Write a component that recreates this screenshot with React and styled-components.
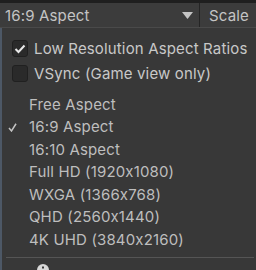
import React from "react";
import styled, { createGlobalStyle } from "styled-components";

const Global = createGlobalStyle`
  html, body { margin: 0; padding: 0; background: #383838; }
  body {
    width: 256px; height: 270px; overflow: hidden;
    font-family: Inter, "Noto Sans", sans-serif;
    font-feature-settings: "calt" 0;
    letter-spacing: 0.15px;
  }
`;

const Page = styled.div`
  width: 256px;
  height: 270px;
  display: flex;
  flex-direction: column;
  background: #383838;
  overflow: hidden;
`;

const TopStrip = styled.div`
  height: 3px;
  background: #1f1f1f;
  flex-shrink: 0;
`;

const Toolbar = styled.div`
  height: 24px;
  display: flex;
  background: #3c3c3c;
  border-bottom: 1px solid #4a4a4a;
  flex-shrink: 0;
`;

const Dropdown = styled.div`
  width: 200px;
  display: flex;
  align-items: center;
  justify-content: space-between;
  padding: 1px 6px 0 5px;
  box-sizing: border-box;
  color: #c4c4c4;
  font-size: 15px;
  border-right: 1px solid #252525;
`;

const ToolLabel = styled.div`
  padding: 1px 0 0 9px;
  display: flex;
  align-items: center;
  color: #c4c4c4;
  font-size: 15px;
`;

const Body = styled.div`
  flex: 1;
  display: flex;
`;

const EdgeStrip = styled.div`
  width: 2px;
  background: #4d5866;
`;

const Menu = styled.div`
  flex: 1;
  background: #383838;
  padding-top: 8px;
  display: flex;
  flex-direction: column;
`;

const ToggleRow = styled.div`
  height: 25px;
  display: flex;
  align-items: center;
  gap: 6px;
  padding-left: 10px;
  color: #c8c8c8;
  font-size: 15px;
`;

const Box = styled.div`
  width: 16px;
  height: 17px;
  box-sizing: border-box;
  border-radius: 3px;
  background: #2a2a2a;
  border: 1px solid #202020;
  display: flex;
  align-items: center;
  justify-content: center;
`;

const Items = styled.div`
  margin-top: 7px;
  display: flex;
  flex-direction: column;
`;

const Item = styled.div`
  height: 22.5px;
  display: flex;
  align-items: center;
  color: #bebebe;
  font-size: 15px;
  position: relative;
  padding-left: 27px;
`;

const Tick = styled.span`
  position: absolute;
  left: 6px;
  top: 50%;
  transform: translateY(-45%);
  display: flex;
`;

const Separator = styled.div`
  height: 1px;
  background: #555555;
  margin: 6px 2px 0 4px;
`;

const Footer = styled.div`
  padding: 6px 0 0 35px;
  display: flex;
`;

const Arrow = () => (
  <svg width="11" height="7" viewBox="0 0 11 7">
    <path d="M0 0 H11 L5.5 7 Z" fill="#c4c4c4" />
  </svg>
);

const Check = () => (
  <svg width="12" height="10" viewBox="0 0 12 10">
    <path d="M1.5 5 L4.5 8 L10.5 1.5" stroke="#e8e8e8" strokeWidth="2" fill="none" />
  </svg>
);

const SmallTick = () => (
  <svg width="9" height="9" viewBox="0 0 9 9">
    <path d="M1 5 L3.5 8 L8 0.8" stroke="#c4c4c4" strokeWidth="1.5" fill="none" />
  </svg>
);

const Info = () => (
  <svg width="12" height="12" viewBox="0 0 12 12">
    <circle cx="6" cy="6" r="6" fill="#d8d8d8" />
    <rect x="5" y="2.5" width="2" height="2" fill="#383838" />
  </svg>
);

const items = [
  "Free Aspect",
  "16:9 Aspect",
  "16:10 Aspect",
  "Full HD (1920x1080)",
  "WXGA (1366x768)",
  "QHD (2560x1440)",
  "4K UHD (3840x2160)",
];

export default function App() {
  return (
    <Page>
      <Global />
      <TopStrip />
      <Toolbar>
        <Dropdown>
          <span>16:9 Aspect</span>
          <Arrow />
        </Dropdown>
        <ToolLabel>Scale</ToolLabel>
      </Toolbar>
      <Body>
        <EdgeStrip />
        <Menu>
          <ToggleRow>
            <Box><Check /></Box>
            <span>Low Resolution Aspect Ratios</span>
          </ToggleRow>
          <ToggleRow>
            <Box />
            <span>VSync (Game view only)</span>
          </ToggleRow>
          <Items>
            {items.map((t, i) => (
              <Item key={t}>
                {i === 1 && (
                  <Tick><SmallTick /></Tick>
                )}
                {t}
              </Item>
            ))}
          </Items>
          <Separator />
          <Footer>
            <Info />
          </Footer>
        </Menu>
      </Body>
    </Page>
  );
}
